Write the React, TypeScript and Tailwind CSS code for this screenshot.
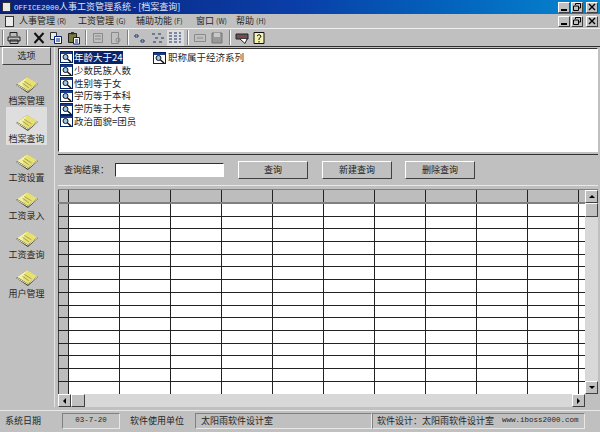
import React from 'react';

const cjk = '"Noto Sans CJK SC", "Liberation Sans", sans-serif';
const mono = '"Liberation Mono", monospace';

const raised = 'border border-t-white border-l-white border-r-[#404040] border-b-[#404040]';
const sunken = 'border border-t-[#303030] border-l-[#303030] border-r-white border-b-white';
const statusBox = 'border border-t-[#808080] border-l-[#808080] border-r-[#e8e8e8] border-b-[#e8e8e8]';

const listItems = ['年龄大于24', '少数民族人数', '性别等于女', '学历等于本科', '学历等于大专', '政治面貌=团员'];
const navItems = ['档案管理', '档案查询', '工资设置', '工资录入', '工资查询', '用户管理'];
const columns = Array.from({ length: 10 });
const rows = Array.from({ length: 14 });

const BookIcon = () => (
  <svg width="24" height="18" viewBox="0 0 26 20">
    <path d="M1 10 L13 1 L25 9 L14 19 Z" fill="#3a3a20" />
    <path d="M2 9 L13 1 L24 8 L14 16 Z" fill="#f4f2a8" />
    <path d="M13 1 L24 8 L14 16 L8 11 Z" fill="#e8e070" />
    <path d="M2 10 L14 17 L24 9" fill="none" stroke="#fbfbe0" strokeWidth="1" />
    <path d="M10 6 L18 11 M8 8 L15 13" stroke="#9a9a50" strokeWidth="1" />
  </svg>
);

const QueryIcon = () => (
  <svg width="13" height="12" viewBox="0 0 13 12" className="shrink-0">
    <rect x="0.5" y="0.5" width="12" height="11" fill="#fff" stroke="#00205e" />
    <rect x="1" y="1" width="11" height="2" fill="#1a3a90" />
    <circle cx="5.5" cy="6" r="2.5" fill="#9fc8e8" stroke="#111" />
    <path d="M7.5 8 L11 11" stroke="#111" strokeWidth="1.6" />
  </svg>
);

const ToolIcon = ({ children, active }: { children: React.ReactNode; active?: boolean }) => (
  <div className={`flex h-[16px] w-[17.5px] shrink-0 items-center justify-center ${active ? 'bg-[#dcdcdc]' : ''}`}>
    <svg width="14" height="14" viewBox="0 0 14 14">{children}</svg>
  </div>
);

const Sep = () => <div className="mx-[2.5px] h-[15px] w-[2px] shrink-0 border-l border-r border-l-[#808080] border-r-white" />;

const WinButtons = () => (
  <div className="flex gap-[1px]">
    <div className={`flex h-[11px] w-[12px] items-end justify-center bg-[#c0c0c0] pb-[1px] ${raised}`}>
      <div className="h-[2px] w-[6px] bg-black" />
    </div>
    <div className={`flex h-[11px] w-[12px] items-center justify-center bg-[#c0c0c0] ${raised}`}>
      <svg width="8" height="8" viewBox="0 0 8 8">
        <path d="M2.5 2 V0.5 H7.5 V5 H6 M0.5 3 H5.5 V7.5 H0.5 Z" fill="none" stroke="#000" />
      </svg>
    </div>
    <div className={`ml-[2px] flex h-[11px] w-[12px] items-center justify-center bg-[#c0c0c0] ${raised}`}>
      <svg width="8" height="8" viewBox="0 0 8 8">
        <path d="M1 1 L7 7 M7 1 L1 7" stroke="#000" strokeWidth="1.4" />
      </svg>
    </div>
  </div>
);

const ActionButton = ({ label, w }: { label: string; w: string }) => (
  <div className={`flex h-[18px] items-center justify-center bg-[#c0c0c0] text-[9px] text-[#222] ${w} ${raised}`}>{label}</div>
);

const Key = ({ k }: { k: string }) => <span className="ml-[2px] text-[7px]">({k})</span>;

export default function App() {
  return (
    <div className="flex h-[432px] w-[600px] flex-col overflow-hidden bg-[#c0c0c0] text-[#262626]" style={{ fontFamily: cjk }}>
      {/* title bar */}
      <div className="flex h-[14px] shrink-0 items-center justify-between bg-gradient-to-r from-[#0a1f78] via-[#0a3fa8] to-[#0a86d0] pl-[2px] pr-[2px]">
        <div className="flex items-center gap-[3px] whitespace-nowrap text-[9px] leading-[12px] text-[#dfe6f5]">
          <div className="h-[10px] w-[9px] border border-[#333] bg-[#e8e8e8]" />
          <span><span style={{ fontFamily: mono }} className="text-[7.5px]">OFFICE2000</span>人事工资管理系统 - [档案查询]</span>
        </div>
        <WinButtons />
      </div>

      {/* menu */}
      <div className="flex h-[15px] shrink-0 items-center justify-between border-b border-b-[#f0f0f0] pl-[5px] pr-[2px]">
        <div className="flex items-center whitespace-nowrap text-[9px] leading-[12px]">
          <div className="mr-[5px] h-[11px] w-[9px] border border-[#333] bg-[#ececec]" />
          <span className="w-[59px]">人事管理<Key k="R" /></span>
          <span className="w-[58px]">工资管理<Key k="G" /></span>
          <span className="w-[60px]">辅助功能<Key k="F" /></span>
          <span className="w-[40px]">窗口<Key k="W" /></span>
          <span>帮助<Key k="H" /></span>
        </div>
        <WinButtons />
      </div>

      {/* toolbar */}
      <div className="flex h-[18px] shrink-0 items-center border-b border-b-[#303030]">
        <div className="ml-[2px] mr-[1.5px] h-[15px] w-[2px] shrink-0 border-l border-r border-l-[#808080] border-r-white" />
        <ToolIcon>
          <path d="M3 5 V1.5 H10 V5 M1 6 H13 V10 H1 Z M3 9 H11 V12.5 H3 Z" fill="#bbb" stroke="#222" />
        </ToolIcon>
        <Sep />
        <ToolIcon>
          <path d="M2.5 2 L11.5 12 M11.5 2 L2.5 12" stroke="#111" strokeWidth="2" />
        </ToolIcon>
        <ToolIcon>
          <path d="M1.5 1.5 H7.5 V8.5 H1.5 Z" fill="#e8e8e8" stroke="#333" />
          <path d="M5.5 5.5 H12.5 V12.5 H5.5 Z" fill="#fff" stroke="#00207a" />
          <path d="M7 8 H11 M7 10 H11" stroke="#00207a" />
        </ToolIcon>
        <ToolIcon>
          <path d="M1.5 2.5 H9.5 V11.5 H1.5 Z" fill="#7a7a40" stroke="#222" />
          <path d="M4 1 H7 V3.5 H4 Z" fill="#333" />
          <path d="M6.5 6.5 H12.5 V13 H6.5 Z" fill="#fff" stroke="#00207a" />
          <path d="M8 9 H11 M8 11 H11" stroke="#00207a" />
        </ToolIcon>
        <Sep />
        <ToolIcon>
          <path d="M2.5 2.5 H11.5 V11.5 H2.5 Z M4 5 H10 M4 8 H10" fill="none" stroke="#8a8a8a" />
        </ToolIcon>
        <ToolIcon>
          <path d="M2.5 1.5 H9.5 V12.5 H2.5 Z" fill="none" stroke="#8a8a8a" />
          <circle cx="9" cy="9" r="2" fill="none" stroke="#8a8a8a" />
        </ToolIcon>
        <Sep />
        <ToolIcon>
          <path d="M2 4 H5 V6 H2 Z M8 9 H11 V11 H8 Z" fill="#e8f0f8" stroke="#1a2f70" />
        </ToolIcon>
        <ToolIcon>
          <path d="M1 3 H4 M7 3 H10 M4 7 H7 M10 7 H13 M2 11 H5 M8 11 H11" stroke="#1a2f70" />
        </ToolIcon>
        <ToolIcon active>
          <path d="M1 2 H4 M1 5 H4 M1 8 H4 M1 11 H4 M6 2 H9 M6 5 H9 M6 8 H9 M6 11 H9 M11 2 H13 M11 5 H13 M11 8 H13 M11 11 H13" stroke="#1a2f70" />
        </ToolIcon>
        <Sep />
        <ToolIcon>
          <path d="M1.5 3.5 H12.5 V10.5 H1.5 Z M4 7 H10" fill="none" stroke="#8a8a8a" />
        </ToolIcon>
        <ToolIcon>
          <path d="M2 2 H12 V12 H2 Z" fill="#999" stroke="#777" />
          <path d="M4 2 H10 V6 H4 Z" fill="#c8c8c8" />
        </ToolIcon>
        <Sep />
        <ToolIcon>
          <path d="M1 3 H13 V8 H1 Z" fill="#5a5a5a" stroke="#222" />
          <path d="M3 5 H11" stroke="#b03030" />
          <path d="M5 8 L10 12.5 L12 8" fill="#fff" stroke="#222" />
        </ToolIcon>
        <ToolIcon>
          <path d="M2 1.5 H12 V12.5 H2 Z" fill="#f4f2b0" stroke="#111" />
          <path d="M5 5 Q7 2 9 5 Q9 6.5 7 7.5 V9 M7 10 V11.5" fill="none" stroke="#111" />
        </ToolIcon>
      </div>

      {/* body */}
      <div className="flex min-h-0 flex-1">
        {/* sidebar */}
        <div className="flex w-[55px] shrink-0 flex-col items-center border-r border-r-[#e4e4e4] pr-[1px] pt-0">
          <div className={`flex h-[18px] w-[49px] shrink-0 items-center justify-center text-[9px] ${raised}`}>选项</div>
          <div className="mt-[3px] flex flex-col items-center">
            {navItems.map((item, i) => (
              <div
                key={item}
                className={`flex h-[38.6px] w-[41px] flex-col items-center justify-end gap-[1px] pb-[1px] text-[9px] leading-[11px] ${i === 1 ? 'bg-[#dedede]' : ''}`}
              >
                <BookIcon />
                <span className="whitespace-nowrap">{item}</span>
              </div>
            ))}
          </div>
        </div>

        {/* main */}
        <div className="flex min-w-0 flex-1 flex-col pl-[3px] pr-[2px] pt-[1px]">
          {/* query list */}
          <div className={`flex h-[104px] shrink-0 gap-[22px] bg-white pl-[1px] pt-[2px] text-[9.5px] leading-[13px] ${sunken}`}>
            <div className="flex w-[71px] flex-col">
              {listItems.map((item, i) => (
                <div key={item} className="flex h-[12.8px] items-center gap-px">
                  <QueryIcon />
                  <span className={`whitespace-nowrap ${i === 0 ? 'bg-[#0a246a] text-white' : ''}`}>{item}</span>
                </div>
              ))}
            </div>
            <div className="flex h-[13px] items-center gap-[2px]">
              <QueryIcon />
              <span>职称属于经济系列</span>
            </div>
          </div>

          {/* query bar */}
          <div className="mt-[2px] flex h-[32px] shrink-0 items-center border-t border-t-[#303030] border-b border-b-[#e8e8e8] pl-[6px] text-[9px]">
            <span className="w-[51px]">查询结果：</span>
            <div className={`h-[14px] w-[109px] bg-white ${sunken}`} />
            <ActionButton label="查询" w="ml-[14px] w-[70px]" />
            <ActionButton label="新建查询" w="ml-[14px] w-[70px]" />
            <ActionButton label="删除查询" w="ml-[13px] w-[70px]" />
          </div>

          {/* grid */}
          <div className="mt-[3px] flex min-h-0 flex-1 flex-col border-t border-t-[#808080]">
            <div className="flex min-h-0 flex-1">
              <div className="min-w-0 flex-1 overflow-hidden">
                <div className="flex h-[14px] border-b-[2px] border-b-[#808080] bg-[#bdbdbd]">
                  <div className="w-[11px] shrink-0 border-l border-l-[#404040] border-r border-r-[#222]" />
                  {columns.map((_, c) => (
                    <div key={c} className="w-[51px] shrink-0 border-r border-r-[#222]" />
                  ))}
                </div>
                {rows.map((_, r) => (
                  <div key={r} className="flex h-[12.7px] border-b border-b-[#222] bg-white">
                    <div className="w-[11px] shrink-0 border-l border-l-[#404040] border-r border-r-[#222] bg-[#bdbdbd]" />
                    {columns.map((_, c) => (
                      <div key={c} className="w-[51px] shrink-0 border-r border-r-[#222]" />
                    ))}
                  </div>
                ))}
                <div className="flex h-[13px] bg-white">
                  <div className="w-[11px] shrink-0 border-l border-l-[#404040] border-r border-r-[#222] bg-[#bdbdbd]" />
                  {columns.map((_, c) => (
                    <div key={c} className="w-[51px] shrink-0 border-r border-r-[#222]" />
                  ))}
                </div>
              </div>
              {/* vertical scrollbar */}
              <div className="flex w-[13px] shrink-0 flex-col bg-[#d8d8d8]">
                <div className={`flex h-[13px] shrink-0 items-center justify-center bg-[#c0c0c0] ${raised}`}>
                  <div className="h-0 w-0 border-x-[3px] border-b-[3px] border-x-transparent border-b-black" />
                </div>
                <div className={`h-[14px] shrink-0 bg-[#c0c0c0] ${raised}`} />
                <div className="flex-1" />
                <div className={`flex h-[13px] shrink-0 items-center justify-center bg-[#c0c0c0] ${raised}`}>
                  <div className="h-0 w-0 border-x-[3px] border-t-[3px] border-x-transparent border-t-black" />
                </div>
              </div>
            </div>
            {/* horizontal scrollbar */}
            <div className="flex h-[13px] shrink-0 bg-[#d8d8d8]">
              <div className={`flex w-[13px] items-center justify-center bg-[#c0c0c0] ${raised}`}>
                <div className="h-0 w-0 border-y-[3px] border-r-[3px] border-y-transparent border-r-black" />
              </div>
              <div className={`w-[14px] bg-[#c0c0c0] ${raised}`} />
              <div className="flex-1" />
              <div className={`flex w-[13px] items-center justify-center bg-[#c0c0c0] ${raised}`}>
                <div className="h-0 w-0 border-y-[3px] border-l-[3px] border-y-transparent border-l-black" />
              </div>
              <div className="w-[13px] bg-[#c0c0c0]" />
            </div>
          </div>
        </div>
      </div>

      {/* status bar */}
      <div className="mt-[3px] flex h-[22px] shrink-0 items-center whitespace-nowrap border-t border-t-[#e8e8e8] pb-[2px] text-[9px]">
        <span className="w-[62px] pl-[5px]">系统日期</span>
        <div className={`flex h-[16px] w-[58px] items-center justify-center text-[7.5px] ${statusBox}`} style={{ fontFamily: mono }}>03-7-20</div>
        <span className="w-[75px] pl-[10px]">软件使用单位</span>
        <div className={`flex h-[16px] w-[177px] items-center pl-[5px] ${statusBox}`}>太阳雨软件设计室</div>
        <div className={`flex h-[16px] w-[213px] items-center pl-[4px] ${statusBox}`}>
          <span>软件设计：太阳雨软件设计室</span>
          <span className="ml-[8px] text-[7.5px]" style={{ fontFamily: mono }}>www.iboss2000.com</span>
        </div>
      </div>
    </div>
  );
}
